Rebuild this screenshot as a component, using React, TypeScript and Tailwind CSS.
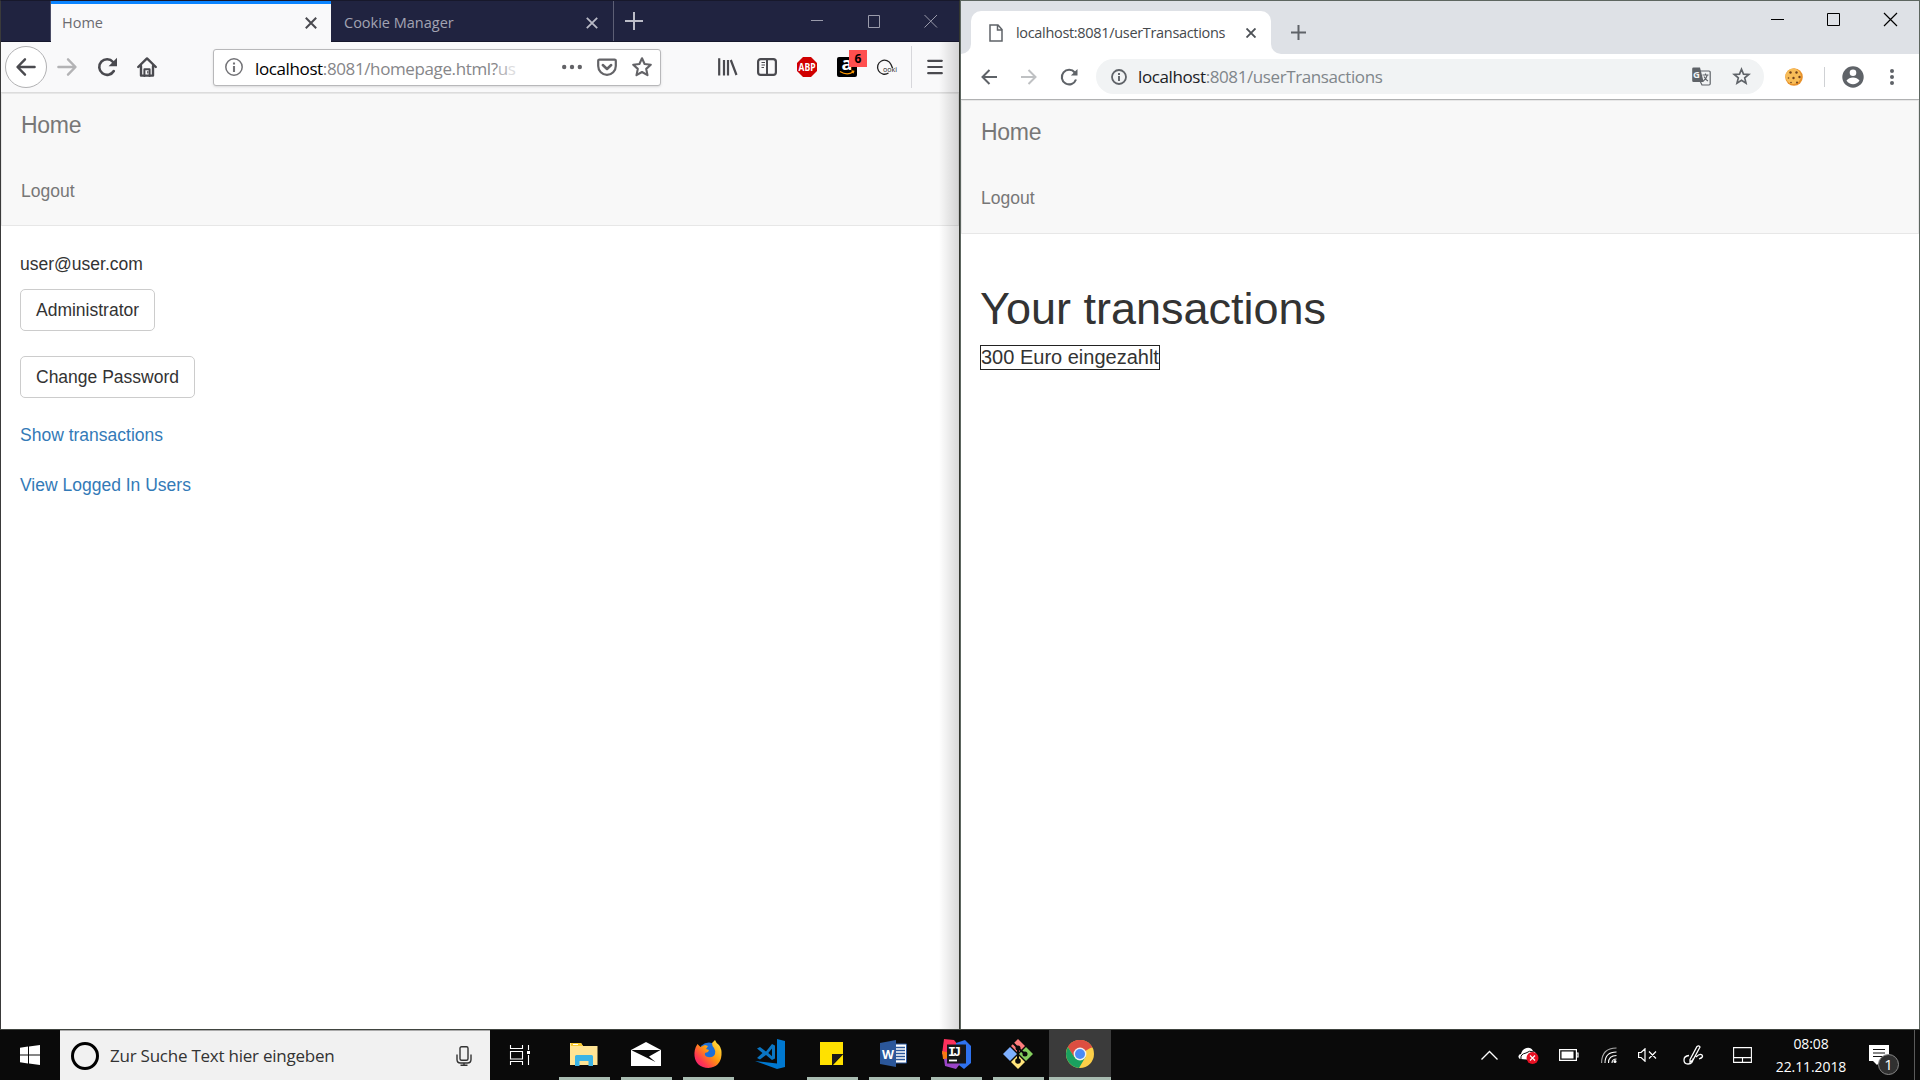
import { ReactNode, SVGProps } from "react";

const S = ({ w = 20, h, children, ...p }: { w?: number; h?: number; children: ReactNode } & SVGProps<SVGSVGElement>) => (
  <svg width={w} height={h ?? w} viewBox={`0 0 ${w} ${h ?? w}`} fill="none" className="shrink-0 overflow-visible" {...p}>{children}</svg>
);

const Cell = ({ children }: { children?: ReactNode }) => (
  <div className="flex h-full w-10 shrink-0 items-center justify-center">{children}</div>
);

const ui = "font-['Open_Sans','Noto_Sans',sans-serif] whitespace-nowrap";

function FirefoxTabs() {
  return (
    <div className="flex h-[41px] bg-[#202340] border-b border-[#15172c]">
      <div className="w-[50px] border-r border-[#4b4d66]" />
      <div className="-mb-px flex w-[280px] items-center border-t-[3px] border-[#0a84ff] bg-[#f9f9fa] pl-[11px]">
        <span className={`${ui} flex-1 text-[14.5px] leading-5 text-[#6b6b70]`}>Home</span>
        <S w={12} className="mr-[14px] shrink-0" stroke="#4a4a4f" strokeWidth="2"><path d="M.8.8l10.4 10.4M11.2.8L.8 11.2" /></S>
      </div>
      <div className="flex w-[283px] items-center border-r border-[#5d5f75] pl-[13px] pt-1">
        <span className={`${ui} flex-1 text-[14.5px] leading-5 text-[#a3a4b3]`}>Cookie Manager</span>
        <S w={12} className="mr-[15px] shrink-0" stroke="#b9bac6" strokeWidth="1.8"><path d="M.8.8l10.4 10.4M11.2.8L.8 11.2" /></S>
      </div>
      <S w={18} className="ml-[11px] mt-[11px] shrink-0" stroke="#bcbdc8" strokeWidth="2"><path d="M9 0v18M0 9h18" /></S>
      <div className="ml-auto mr-[21px] mt-[13px] flex h-[14px] gap-[44px]">
        <S w={13} h={14} stroke="#9a9bab"><path d="M0 6.5h12" /></S>
        <S w={13} h={14} stroke="#9a9bab"><path d="M.5 1.5h11v12H.5z" /></S>
        <S w={13} h={14} stroke="#9a9bab"><path d="M-.5 1l12.500 12.500M12 1L-.5 13.500" /></S>
      </div>
    </div>
  );
}

function FirefoxBar() {
  return (
    <div className="flex h-[51px] items-center border-b border-[#dcdcdc] bg-[#f9f9fa] pl-1">
      <div className="flex size-[42px] shrink-0 items-center justify-center rounded-full border border-[#b1b1b3] bg-white">
        <S stroke="#4a4a4f" strokeWidth="2.4" strokeLinecap="round" strokeLinejoin="round"><path d="M18.6 10H2M9 2.3L1.5 10 9 17.7" /></S>
      </div>
      <Cell><S stroke="#b3b3b5" strokeWidth="2.4" strokeLinecap="round" strokeLinejoin="round"><path d="M1.4 10H18M11 2.3l7.5 7.7L11 17.7" /></S></Cell>
      <Cell><S stroke="#4a4a4f" strokeWidth="2.6" strokeLinecap="round"><path d="M16.800 14A7.800 7.800 0 1 1 16 5" /><path d="M20 .8v8.400h-8.400z" fill="#4a4a4f" stroke="none" /></S></Cell>
      <Cell><S stroke="#4a4a4f" strokeWidth="2.4" strokeLinejoin="round" strokeLinecap="round"><path d="M1.2 10L10 1.4 18.8 10M4 9v9.6h12V9" /><path d="M7.4 19v-6.8h5.2V19" strokeWidth="2" /><path d="M10.8 14.5v1.5" strokeWidth="1.2" /></S></Cell>
      <div className="ml-[46px] flex h-[37px] w-[448px] shrink-0 items-center rounded-[3px] border border-[#b8b8ba] bg-white pl-[11px] shadow-sm">
        <S w={18} stroke="#737377"><circle cx="9" cy="9" r="8.2" strokeWidth="1.5" /><path d="M9 8v6M9 4.4v2" strokeWidth="2.1" /></S>
        <div className={`${ui} ml-[12px] mt-[3px] w-[300px] text-[17px] leading-6 tracking-[-0.38px] text-[#868689]`}>
          <span className="text-black">localhost</span>:8081/homepage.html?<span className="text-[#b5b5b8]">u</span><span className="text-[#dcdcde]">s</span>
        </div>
        <div className="ml-auto mr-2 flex items-center gap-[15px]">
          <S fill="#636367"><circle cx="2.2" cy="10" r="2.2" /><circle cx="10" cy="10" r="2.2" /><circle cx="17.8" cy="10" r="2.2" /></S>
          <S stroke="#636367" strokeWidth="2.2" strokeLinejoin="round" strokeLinecap="round"><path d="M2.5 2.6h15a1.2 1.2 0 0 1 1.3 1.2V9a8.8 8.8 0 0 1-17.6 0V3.800a1.200 1.200 0 0 1 1.300-1.200z" /><path d="M5.800 8l4.200 4 4.200-4" strokeWidth="2.500" /></S>
          <S stroke="#636367" strokeWidth="2.100" strokeLinejoin="round"><path d="M10 1.300l2.600 5.700 6.200.7-4.600 4.200 1.300 6.300-5.500-3.200-5.500 3.200 1.300-6.300L1.200 7.700l6.200-.7z" /></S>
        </div>
      </div>
      <div className="ml-[46px] flex h-full items-center">
        <Cell><S stroke="#4a4a4f" strokeWidth="2.200"><path d="M2.200 1.300V18.500M7 3V18.500M11 3V18.500M13.800 3l5.700 15" /></S></Cell>
        <Cell><S stroke="#4a4a4f"><rect x="1.100" y="2.100" width="17.800" height="15.800" rx="2.600" strokeWidth="2.200" /><path d="M10 2v16" strokeWidth="2" /><path d="M4.500 5.500H8M4.500 8H8M4.500 10.500H7" strokeWidth="1.200" /></S></Cell>
        <Cell>
          <S><path d="M6 0h8l6 6v8l-6 6H6l-6-6V6z" fill="#d00000" /><text x="1.500" y="13.800" textLength="17" lengthAdjust="spacingAndGlyphs" fill="#fff" fontFamily="Open Sans" fontWeight="700" fontSize="10.500">ABP</text></S>
        </Cell>
        <Cell>
          <div className="relative">
            <S><rect width="20" height="20" rx="2" fill="#000" /><text x="10" y="13" textAnchor="middle" fill="#fff" fontFamily="Open Sans" fontWeight="700" fontSize="18">a</text><path d="M3 14.500q7 4.500 13 .5M14.500 14l2.200.2-.7 2" stroke="#ff9900" strokeWidth="1.300" /></S>
            <div className="absolute -top-[7px] left-3 flex h-[17px] w-[18px] items-center justify-center bg-[#ff4f4f] font-['Open_Sans',sans-serif] text-[12px] font-bold leading-none text-black">6</div>
          </div>
        </Cell>
        <Cell>
          <S><path d="M11.500 16A7 7 0 1 1 14 7.500L15.500 11" stroke="#222" strokeWidth="1.300" /><text x="6" y="14.500" textLength="14" lengthAdjust="spacingAndGlyphs" fill="#222" fontFamily="Open Sans" fontSize="8">ooki</text></S>
        </Cell>
        <div className="ml-1 h-[42px] w-px bg-[#d7d7db]" />
        <div className="ml-[3px]"><Cell><S w={16} stroke="#4a4a4f" strokeWidth="2.200" strokeLinecap="round"><path d="M1.200 1.800h13.600M1.200 8h13.600M1.200 14.200h13.600" /></S></Cell></div>
      </div>
    </div>
  );
}

const Nav = ({ h }: { h: string }) => (
  <div className={`${h} border border-[#e7e7e7] bg-[#f8f8f8] pl-[19px] text-[#777]`}>
    <div className="pt-[17px] text-[23px] leading-[28px] tracking-[-0.3px]">Home</div>
    <div className="pt-[40px] text-[17.5px] leading-[24px]">Logout</div>
  </div>
);

function Firefox() {
  return (
    <div className="relative flex w-[960px] flex-col overflow-hidden border-l border-r border-t border-l-[#3a3a3a] border-r-[#33362f] border-t-[#17182b] bg-white">
      <FirefoxTabs />
      <FirefoxBar />
      <div className="font-['Liberation_Sans',Arial,sans-serif] text-[17.5px] leading-[25px] text-[#333]">
        <Nav h="h-[133px]" />
        <div className="flex flex-col items-start pl-[19px] pt-[26px]">
          <div>user@user.com</div>
          <div className="mt-[12px] flex h-[42px] items-center rounded-[5px] border border-[#ccc] px-[15px]">Administrator</div>
          <div className="mt-[25px] flex h-[42px] items-center rounded-[5px] border border-[#ccc] px-[15px]">Change Password</div>
          <div className="mt-[25px] text-[#337ab7]">Show transactions</div>
          <div className="mt-[25px] text-[#337ab7]">View Logged In Users</div>
        </div>
      </div>
      <div className="absolute bottom-0 right-0 top-[41px] w-5 bg-gradient-to-r from-black/0 to-black/15" />
    </div>
  );
}

function Chrome() {
  return (
    <div className="flex w-[960px] flex-col border-l border-r border-t border-[#5d6660] bg-white">
      <div className="flex h-[53px] bg-[#dee1e6]">
        <div className="w-[10px] bg-white"><div className="h-full rounded-br-[10px] bg-[#dee1e6]" /></div>
        <div className="flex w-[300px] bg-[#dee1e6]">
          <div className="mt-[10px] flex w-full items-center rounded-t-[10px] bg-white pl-[18px]">
            <S w={14} h={18} stroke="#5f6368" strokeWidth="1.500"><path d="M1 1h8l4 4.500V17H1zM8.500 1v5H13" /></S>
            <span className={`${ui} ml-[13px] flex-1 text-[14.5px] leading-5 tracking-[-0.32px] text-[#45494d]`}>localhost:8081/userTransactions</span>
            <S w={10} className="mr-[15px] shrink-0" stroke="#4d5156" strokeWidth="1.900"><path d="M.5.5l9 9M9.500.5l-9 9" /></S>
          </div>
        </div>
        <div className="w-5 bg-white"><div className="h-full rounded-bl-[10px] bg-[#dee1e6]" /></div>
        <S w={15} className="mt-6 shrink-0" stroke="#5f6368" strokeWidth="2"><path d="M7.500 0v15M0 7.500h15" /></S>
        <div className="ml-auto mr-[21px] mt-3 flex gap-[43px]">
          <S w={14} h={13} stroke="#000"><path d="M1 6.500h13" /></S>
          <S w={14} h={13} stroke="#000"><path d="M.5.5h12v12H.5z" /></S>
          <S w={14} h={13} stroke="#000" strokeWidth="1.200"><path d="M0 0l13 13M13 0L0 13" /></S>
        </div>
      </div>
      <div className="flex h-[46px] items-center border-b border-[#b0b1b2] pl-2">
        <Cell><S w={16} stroke="#5f6368" strokeWidth="2"><path d="M16 8H1.500M8.500 1L1.500 8l7 7" /></S></Cell>
        <Cell><S w={16} stroke="#bfc1c3" strokeWidth="2"><path d="M0 8h14.500M7.500 1l7 7-7 7" /></S></Cell>
        <Cell><S w={18} stroke="#5f6368" strokeWidth="2.100"><path d="M16 11.500A7.300 7.300 0 1 1 14.800 4.500" /><path d="M17.500 1v6.500h-6.600z" fill="#5f6368" stroke="none" /></S></Cell>
        <div className="ml-[7px] flex h-[35px] w-[668px] items-center rounded-full bg-[#f1f3f4] pl-[15px] pr-[13px]">
          <S w={16} stroke="#5f6368"><circle cx="8" cy="8" r="7" strokeWidth="1.800" /><path d="M8 7v5M8 4v2" strokeWidth="1.900" /></S>
          <span className={`${ui} ml-[11px] text-[17px] leading-6 tracking-[-0.4px] text-[#80868b]`}><span className="text-[#202124]">localhost</span>:8081/userTransactions</span>
          <div className="ml-auto flex items-center gap-[21px]">
            <S w={19}><path d="M7 4h10a1.200 1.200 0 0 1 1.200 1.200v11.600A1.200 1.200 0 0 1 17 18H10L8 14" stroke="#5f6368" strokeWidth="1.200" /><path d="M1.500.5H8l3.700 14.500H1.500A1.300 1.300 0 0 1 .2 13.700V1.800A1.300 1.300 0 0 1 1.500.5z" fill="#5f6368" /><text x="1" y="11" fill="#f1f3f4" fontFamily="Open Sans" fontWeight="700" fontSize="9.500">G</text><path d="M10.500 8h6M13.500 6.500V8M15.300 8q-1 4-4 6M12 9.500q1.500 3 4 4.500" stroke="#5f6368" strokeWidth="1.100" /></S>
            <S w={19} stroke="#5f6368" strokeWidth="1.700"><path d="M9.500 2.200l2 4.900 5.300.4-4.100 3.400 1.300 5.200-4.500-2.800L5 16.100l1.300-5.200-4.100-3.400 5.300-.4z" /></S>
          </div>
        </div>
        <div className="ml-[21px]">
          <S w={18}><circle cx="9" cy="9" r="8.800" fill="#e8912a" /><circle cx="8.200" cy="8.200" r="7.700" fill="#f8bd58" /><g fill="#70401b"><circle cx="5.500" cy="4.500" r="1.200" /><circle cx="11.500" cy="4.500" r="1.200" /><circle cx="8.500" cy="10" r="1.200" /><circle cx="14.500" cy="9" r="1.200" /><circle cx="3.500" cy="10" r=".8" /><circle cx="12" cy="14.500" r="1" /><circle cx="6" cy="14.500" r=".8" /></g></S>
        </div>
        <div className="ml-[21px] h-5 w-px bg-[#cfd1d4]" />
        <S w={22} className="ml-[17px] shrink-0"><circle cx="11" cy="11" r="10.700" fill="#5f6368" /><circle cx="11" cy="6.800" r="3.300" fill="#fff" /><path d="M4.500 14.500q2.500-3 6.500-3t6.500 3Q15 18.300 11 18.300t-6.500-3.800z" fill="#fff" /></S>
        <S w={4} h={16} className="ml-[26px] shrink-0" fill="#5f6368"><circle cx="2" cy="2" r="2" /><circle cx="2" cy="8" r="2" /><circle cx="2" cy="14" r="2" /></S>
      </div>
      <div className="font-['Liberation_Sans',Arial,sans-serif] text-[#333]">
        <Nav h="h-[134px]" />
        <div className="pl-[19px] pt-[50px]">
          <h1 className="text-[45px] leading-[50px]">Your transactions</h1>
          <div className="mt-[11px] inline-flex h-[25px] items-center whitespace-nowrap border border-[#222] text-[20px] leading-[23px]">300 Euro eingezahlt</div>
        </div>
      </div>
    </div>
  );
}

const TaskbarApp = ({ children, bar = true, active = false }: { children: ReactNode; bar?: boolean; active?: boolean }) => (
  <div className={`flex h-full w-[62px] flex-col items-center ${active ? "bg-[#3b3b3b]" : ""}`}>
    <div className="flex flex-1 items-center">{children}</div>
    <div className={`h-[3px] ${active ? "w-full" : "w-[51px]"} ${bar ? "bg-[#a8bcb1]" : ""}`} />
  </div>
);

function Taskbar() {
  return (
    <div className="flex h-[50px] bg-[#0a0a0a] text-white">
      <div className="flex w-[60px] items-center justify-center"><S fill="#fff"><path d="M0 2.700L8 1.500v8H0zM9 1.400L20 0v9.500H9zM0 10.500h8v8l-8-1.200zM9 10.500h11V20L9 18.600z" /></S></div>
      <div className="flex w-[430px] items-center border-t border-[#aaa] bg-[#f1f1f1] pl-[11px]">
        <div className="size-7 rounded-full border-[3.500px] border-black" />
        <span className={`${ui} ml-[11px] flex-1 text-[17px] leading-6 tracking-[-0.24px] text-[#333]`}>Zur Suche Text hier eingeben</span>
        <S w={16} h={20} className="mr-[18px] shrink-0" stroke="#333" strokeWidth="1.400"><rect x="4" y=".8" width="8" height="13.500" rx="1.500" /><path d="M1 8.500v5Q1 17 4.500 17h7Q15 17 15 13.500v-5M8 17v2.300M4.500 19.300h7" /></S>
      </div>
      <div className="flex w-[63px] items-center pl-5"><S stroke="#fff" strokeWidth="1.100"><path d="M.5 0v3.500h12V0M.5 20v-3.500h12V20M.5 6.500h12v7.500H.5zM18.500 0v5M18.500 10v10" /><rect x="17" y="6" width="3" height="3" fill="#fff" stroke="none" /></S></div>
      <TaskbarApp><S w={28} h={24}><path d="M0 1h11l2 3h14.500v19H0z" fill="#ffe494" /><path d="M1 1h10l2 3H1z" fill="#f7c92f" /><path d="M3 2h5v1H3z" fill="#fff" /><path d="M5 24V14.500A1.500 1.500 0 0 1 6.500 13h15a1.500 1.500 0 0 1 1.500 1.500V24h-4.500v-5h-9v5z" fill="#3bb4e6" /></S></TaskbarApp>
      <TaskbarApp><S w={30} h={24}><path d="M0 8L15 0l15 8v16H0z" fill="#fff" /><path d="M.5 8h29L18 14.500 24.500 20 2 9z" fill="#0a0a0a" /></S></TaskbarApp>
      <TaskbarApp><S w={28}>
        <defs><linearGradient id="ff" x1="1" y1="0" x2="0" y2="1"><stop offset="0" stopColor="#fff14a" /><stop offset=".45" stopColor="#ff980e" /><stop offset=".75" stopColor="#ff3750" /><stop offset="1" stopColor="#e31587" /></linearGradient></defs>
        <circle cx="15" cy="13" r="10.500" fill="#1c6fd8" /><path d="M3.500 4l3 3L11 5l3 1-2 3 3 1-1 2-3 1q-1 3 3 4 5 1 7-3 1-3-1-6-2-2-2-5l3-3q1 3 4 5 3 4 2.500 10-1 12-13 13Q2 27.500.5 16 0 9 3.500 4z" fill="url(#ff)" /></S></TaskbarApp>
      <TaskbarApp bar={false}><S w={30}><path d="M22 0l8 2v26l-8 2L0 22l22 2.500z" fill="#0078d0" /><path d="M2 9.500l3-1.500 6 4.500L17 5l3 1.500v13L17 21l-6-5-6 4.500L2 19l5.500-5zM17 9.500L13.300 14l3.700 3.300z" fill="#0a76c4" fillRule="evenodd" /></S></TaskbarApp>
      <TaskbarApp><S w={24} h={23}><path d="M0 0h23v12H12v11H0z" fill="#ffe100" /><path d="M12 12h11L12 23z" fill="#1a1a1a" /><path d="M13 23L23 12.500V23z" fill="#ffe100" /></S></TaskbarApp>
      <TaskbarApp><S w={28} h={27}><path d="M14 4h12.500v19H14z" fill="#fff" stroke="#2b579a" /><path d="M16 7.500h9M16 10.500h9M16 13.500h9M16 16.500h9M16 19.500h9" stroke="#2b579a" strokeWidth="1.400" /><path d="M0 3L16 0v27L0 24z" fill="#2b579a" /><text x="2" y="18.500" textLength="12" lengthAdjust="spacingAndGlyphs" fill="#fff" fontFamily="Open Sans" fontWeight="700" fontSize="13">W</text></S></TaskbarApp>
      <TaskbarApp><S w={30}><path d="M3 0l10 1 4 5-5 14-11-5z" fill="#fe315d" /><path d="M1 12l8 2v7l-7-1z" fill="#f97a12" /><path d="M15 4l9-3 6 6v17l-7 6-9-7z" fill="#2f72ee" /><path d="M3 20l11-2 5 7-4 5-11-3z" fill="#9b45c8" /><rect x="6" y="5.500" width="19" height="19" fill="#161616" /><text x="7" y="16.500" fill="#fff" fontFamily="Liberation Mono" fontWeight="700" fontSize="13" textLength="13">IJ</text><path d="M8 21.500h8" stroke="#fff" strokeWidth="1.800" /></S></TaskbarApp>
      <TaskbarApp><S w={30}><path d="M15 0l7 7-7 7-7-7z" fill="#ff7d7d" /><path d="M7 8l7 7-7 7-7-7z" fill="#7eb0ff" /><path d="M23 8l7 7-7 7-7-7z" fill="#84cf5e" /><path d="M15 16l7 7-7 7-7-7z" fill="#ffe47a" /><path d="M9.500 3.500L15 9v13M15 9l7 6" stroke="#0a0a0a" strokeWidth="2" /><g fill="#0a0a0a"><circle cx="15" cy="9" r="2.500" /><circle cx="22" cy="15" r="2.500" /><circle cx="15" cy="22" r="2.800" /></g></S></TaskbarApp>
      <TaskbarApp active><S w={28}><circle cx="14" cy="14" r="14" fill="#fccf48" /><path d="M14 14L1.900 7A14 14 0 0 1 26.100 7z" fill="#dc4e41" /><path d="M14 7.500h12.300A14 14 0 0 0 1.900 7L8 17z" fill="#dc4e41" /><path d="M1.900 7A14 14 0 0 0 13 28l6.500-11H8.200z" fill="#1aa15f" /><circle cx="14" cy="14" r="6.400" fill="#f1f1f1" /><circle cx="14" cy="14" r="5" fill="#4a8af4" /></S></TaskbarApp>
      <div className="ml-auto flex items-center">
        <S w={16} h={9} stroke="#fff" strokeWidth="1.300"><path d="M-.5 8.500L7.500 .5l8 8" /></S>
        <S w={21} h={18} className="ml-[20px] mt-0.5 shrink-0"><path d="M3 12Q0 12 .5 9q.5-2 2.500-2 1-5 5.500-6Q13 0 15 4q3 1 3 4l-5 5z" fill="#fff" /><path d="M3 12q-1-5 5-6 3-3 8-1" stroke="#0a0a0a" /><circle cx="14.500" cy="11" r="6" fill="#e81123" /><path d="M12 8.500l5 5M17 8.500l-5 5" stroke="#fff" strokeWidth="1.200" /></S>
        <S w={20} h={12} className="ml-[20px] shrink-0"><path d="M.6.600h16.800v10.800H.6zM17.500 4h1.500v4h-1.500" stroke="#fff" strokeWidth="1.200" /><path d="M2.500 2.500h12v7h-12z" fill="#fff" /></S>
        <S w={16} className="ml-[22px] shrink-0" stroke="#fff" strokeWidth="1.100"><path d="M.6 16Q.6 1 15.500 1" stroke="#aaa" /><path d="M4 16Q4 5 15.500 5M7.500 16q0-7.500 8-7.500M11 16q0-4 4.500-4" /><circle cx="14" cy="14.500" r="1.500" fill="#fff" stroke="none" /></S>
        <S w={19} h={14} className="ml-[21px] shrink-0" stroke="#fff" strokeWidth="1.200"><path d="M.6 4.500h2.500L7 .8v12.400L3.100 9.500H.6zM11 3.500l7 7M18 3.500l-7 7" /></S>
        <S w={21} className="ml-[26px] shrink-0" stroke="#fff" strokeWidth="1.300"><path d="M6 10.500Q1 11 1 15q0 4 4 4 5 0 5-5.500M7 14.500L14 1.500q2-1.500 3 .5L10 15l-3 2zM13 12q4-4 6-2t-3 4" /></S>
        <S w={19} h={16} className="ml-[29px] shrink-0" stroke="#fff" strokeWidth="1.100"><path d="M.6.600h17.800v14.800H.6zM.6 10.600h17.800M9.500 10.600v5" /></S>
        <div className={`${ui} ml-[18px] w-[82px] text-center text-[14px] leading-[23px] tracking-[-0.1px]`}><div>08:08</div><div>22.11.2018</div></div>
        <div className="relative ml-[17px] mr-[25px]">
          <S w={20} h={20}><path d="M0 0h20v16h-8l-4 4-4-4H0z" fill="#fff" /><path d="M4 4.500h12M4 8h12M4 11.500h12" stroke="#111" /></S>
          <div className={`${ui} absolute left-[9px] top-[9px] flex size-[21px] items-center justify-center rounded-full border border-[#888] bg-[#303030] text-[15px] leading-none`}>1</div>
        </div>
        <div className="h-[50px] w-px bg-[#5a5a5a] mr-[5px]" />
      </div>
    </div>
  );
}

export default function App() {
  return (
    <div className="flex h-[1080px] w-[1920px] flex-col overflow-hidden bg-white">
      <div className="flex h-[1030px] border-b border-[#40443f]">
        <Firefox />
        <Chrome />
      </div>
      <Taskbar />
    </div>
  );
}
